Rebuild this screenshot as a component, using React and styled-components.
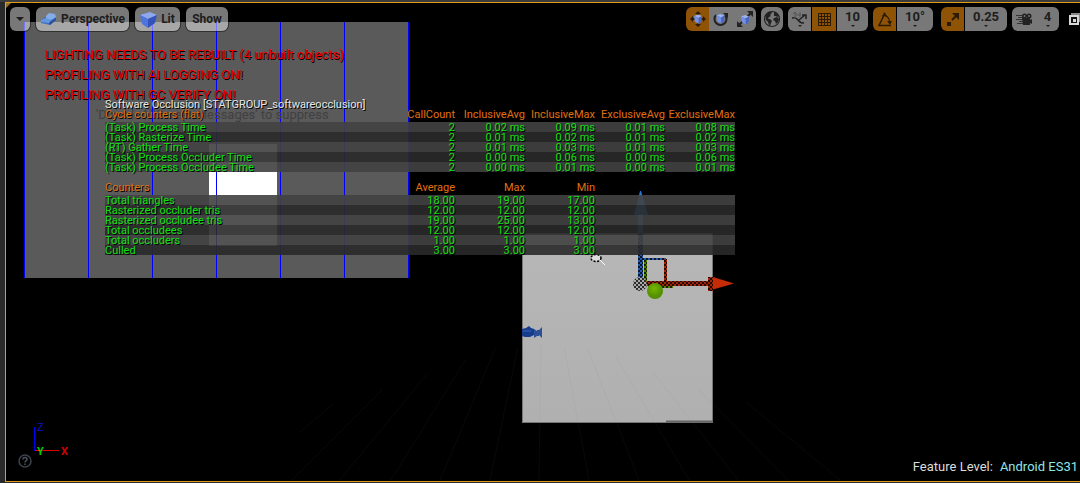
import React from "react";
import styled, { createGlobalStyle, css } from "styled-components";

const GlobalStyle = createGlobalStyle`
  *, *::before, *::after { box-sizing: border-box; }
  body { margin: 0; background: #1e1e1e; font-family: Roboto, "Liberation Sans", sans-serif; }
  button { font: inherit; color: inherit; border: 0; margin: 0; padding: 0; cursor: pointer; }
  svg { flex: none; }
`;

const Page = styled.div`
  min-height: 100vh;
  padding: 2px 0 1px 5px;
  display: flex;
  background: linear-gradient(#3c3c3c 0 2px, #2a2a2a 2px);
`;

const Viewport = styled.main`
  position: relative;
  flex: 1;
  min-width: 0;
  display: flex;
  flex-direction: column;
  overflow: hidden;
  background: #000;
  border: solid #de9c18;
  border-width: 1px 0 1px 1px;
`;

const SceneSvg = styled.svg`
  position: absolute;
  inset: 0;
  width: 100%;
  height: 100%;
`;

const Toolbar = styled.header`
  position: relative;
  display: flex;
  justify-content: space-between;
  padding: 4px 0 0 4px;
  height: 28px;
`;

const ToolGroup = styled.div`
  display: flex;
  gap: ${(p) => p.$gap}px;
`;

const Segments = styled.div`
  display: flex;
  gap: ${(p) => (p.$joined ? 0 : 1)}px;
  border-radius: 6px;
  overflow: hidden;
  margin-right: ${(p) => p.$after || 0}px;
`;

const ToolButton = styled.button`
  position: relative;
  display: flex;
  align-items: center;
  justify-content: center;
  gap: 4px;
  width: ${(p) => p.$w}px;
  height: 24px;
  color: #1d1d1d;
  font-size: ${(p) => p.$size || 12}px;
  font-weight: 700;
  line-height: 16px;
  background: ${(p) => (p.$active ? "#8f5306" : "rgba(255, 255, 255, 0.47)")};
  ${(p) =>
    p.$solo &&
    css`
      border-radius: 6px;
      box-shadow: 0 0 0 1px rgba(0, 0, 0, 0.45);
    `}
  ${(p) =>
    p.$menu &&
    css`
      padding-bottom: 5px;
      &::after {
        content: "";
        position: absolute;
        bottom: 4px;
        left: calc(50% - 2px);
        border: solid transparent;
        border-width: 2px 2px 0;
        border-top-color: #1d1d1d;
      }
    `}
`;

const MaximizeButton = styled.button`
  width: 11px;
  height: 24px;
  background: none;
  overflow: hidden;
  display: flex;
  align-items: center;
`;

const Hud = styled.section`
  position: relative;
  flex: 1;
  display: grid;
  align-items: start;
  justify-items: start;
`;

const Messages = styled.div`
  grid-area: 1 / 1;
  padding: 14px 0 0 39px;
`;

const Warning = styled.p`
  margin: 0;
  font-size: 13px;
  line-height: 20px;
  color: #f00000;
  text-shadow: 1px 1px 0 #000;
`;

const Hint = styled.p`
  margin: 0 0 0 51px;
  font-size: 13px;
  line-height: 20px;
  color: #404040;
`;

const Stats = styled.div`
  grid-area: 1 / 1;
  position: relative;
  width: 630px;
  margin: 68px 0 0 99px;
  font-size: 11px;
  line-height: 8px;
  text-shadow: 1px 1px 0 #000;
`;

const StatsTitle = styled.h2`
  margin: 0;
  padding-top: 2px;
  font-size: 11px;
  font-weight: 400;
  line-height: 8px;
  color: #e6e6e6;
`;

const StatTable = styled.table`
  width: 100%;
  table-layout: fixed;
  border-collapse: collapse;
  margin-bottom: 10px;
  white-space: nowrap;
  color: #10e010;

  th, td { padding: 2px 0 0; height: 10px; font-weight: 400; text-align: right; }
  th:first-child { text-align: left; width: 280px; }
  thead th { height: 13px; padding-bottom: 3px; color: #e07010; }
  tbody tr:nth-child(odd) { background: rgba(66, 66, 66, 0.91); }
  tbody tr:nth-child(even) { background: rgba(42, 42, 42, 0.91); }
`;

const StatusBar = styled.footer`
  position: relative;
  display: flex;
  justify-content: space-between;
  align-items: flex-end;
  padding: 0 2px 4px 12px;
`;

const Corner = styled.div`
  display: flex;
  flex-direction: column;
  padding-bottom: 9px;
`;

const AxisSvg = styled.svg`
  margin: 0 0 -8px 14px;
`;

const HelpButton = styled.button`
  width: 14px;
  height: 14px;
  background: none;
  display: flex;
`;

const Feature = styled.p`
  margin: 0;
  display: flex;
  gap: 7px;
  font-size: 13px;
  line-height: 20px;
  color: #dcdcdc;
  text-shadow: 1px 1px 0 #000;
`;

const FeatureValue = styled.span`
  color: #8fe6e6;
`;

const Cube = ({ x = 0, y = 0, s = 1 }) => (
  <g transform={`translate(${x} ${y}) scale(${s})`}>
    <path d="M0 2 5 0l5 2-4 2.500z" fill="#9ab2f2" />
    <path d="M0 2l6 2.500V12L1 9z" fill="#7390e4" />
    <path d="M10 2 6 4.500V12l3.500-3z" fill="#4565c8" />
  </g>
);

const Icon = ({ w = 16, h = 16, children }) => (
  <svg width={w} height={h} viewBox={`0 0 ${w} ${h}`} aria-hidden="true">
    {children}
  </svg>
);

const DownIcon = () => (
  <Icon w={10} h={6}>
    <path d="M1 1h8L5 5z" fill="#1d1d1d" />
  </Icon>
);

const PerspectiveIcon = () => (
  <Icon w={17} h={14}>
    <path d="M1 8 7 4l4 2 5-1v3l-6 5-9-2z" fill="#3d6fc4" />
    <path d="M6 4 9 1l6 1 1 3-5 3-5-1z" fill="#83aeea" />
    <path d="M1 8l5-2 5 2-2 3-8-1z" fill="#6696de" />
    <path d="M9 11l7-5v2l-6 5z" fill="#294f9a" />
  </Icon>
);

const LitIcon = () => (
  <Icon w={17} h={17}>
    <path d="M0 4 10 1l7 3-9 4z" fill="#8da8ee" />
    <path d="M0 4l8 4v9L2 13z" fill="#4f74df" />
    <path d="M17 4 8 8v9l7-5z" fill="#3453ba" />
  </Icon>
);

const MoveIcon = () => (
  <Icon>
    <path d="M8 0l3 3H9v2H7V3H5zM8 16l3-3H9v-2H7v2H5zM0 8l3-3v2h2v2H3v2zM16 8l-3-3v2h-2v2h2v2z" fill="#2c1a04" />
    <Cube x={4} y={3.500} s={0.800} />
  </Icon>
);

const RotateIcon = () => (
  <Icon>
    <path d="M3 4a6 6 0 1 0 9 0" fill="none" stroke="#222" strokeWidth="2" />
    <path d="M10 2h5v5z" fill="#222" />
    <Cube x={3.500} y={3} s={0.800} />
  </Icon>
);

const ScaleIcon = () => (
  <Icon>
    <path d="M2 14 14 2" stroke="#222" strokeWidth="2" />
    <path d="M10 0h6v6zM0 10v6h6z" fill="#222" />
    <Cube x={4} y={4} s={0.800} />
  </Icon>
);

const GlobeIcon = () => (
  <Icon w={18} h={18}>
    <circle cx="9" cy="9" r="7.500" fill="none" stroke="#222" strokeWidth="1.200" />
    <path d="M2.500 5 6 2l3 0-1 2-1 1 1 1-2 1-1 2 2 0 2 2-1 2-1 3-1-1-1-3-2-2zM11 2l3 1 2 3-2 1-1-1-2 0zM11 8l3-1 2 2-1 3-2 2-1-3-2-1z" fill="#222" />
  </Icon>
);

const SurfaceIcon = () => (
  <Icon w={17} h={18}>
    <path d="M1 8q4-1 6 2t6 3" fill="none" stroke="#222" strokeWidth="1.500" />
    <path d="M4 9V2M2 4l2-2 2 2M5 5h5M9 2v5" fill="none" stroke="#555" />
    <path d="M8 10l6-5M11 5h4v4" fill="none" stroke="#222" strokeWidth="1.500" />
    <path d="M7 15h4l-2 2z" fill="#222" />
  </Icon>
);

const GridIcon = () => (
  <Icon w={15} h={15}>
    <path d="M1 1.500h13M1 4.500h13M1 7.500h13M1 10.500h13M1 13.500h13M1.500 1v13M4.500 1v13M7.500 1v13M10.500 1v13M13.500 1v13" stroke="#2c1a04" />
  </Icon>
);

const AngleIcon = () => (
  <Icon w={16} h={16}>
    <path d="M14 14.500H2L8 2" fill="none" stroke="#2c1a04" strokeWidth="1.500" />
    <path d="M5 5q6-2 8 6" fill="none" stroke="#2c1a04" strokeWidth="1.200" />
    <path d="M10 10h5l-2 4zM7 1l3 4-4 0z" fill="#2c1a04" />
  </Icon>
);

const ScaleSnapIcon = () => (
  <Icon w={14} h={14}>
    <path d="M1 10h4v4H1z" fill="#2c1a04" />
    <path d="M6 8l4-4" stroke="#2c1a04" strokeWidth="2" />
    <path d="M6 1h7v7z" fill="#2c1a04" />
  </Icon>
);

const CameraIcon = () => (
  <Icon w={18} h={14}>
    <path d="M1 3.500h7M3 5.500h6M1 7.500h7M4 9.500h4M2 11.500h6" stroke="#333" />
    <circle cx="9.500" cy="4" r="2.500" fill="#222" />
    <circle cx="14" cy="4" r="2.500" fill="#222" />
    <circle cx="9.500" cy="4" r="0.900" fill="#777" />
    <circle cx="14" cy="4" r="0.900" fill="#777" />
    <path d="M7 6h8v2l2-1v5l-2-1v2H8z" fill="#222" />
  </Icon>
);

const MaximizeIcon = () => (
  <Icon w={14} h={14}>
    <path d="M2 1h12v9H2z" fill="#888" />
    <path d="M0 3h10v10H0z" fill="#d8d8d8" />
    <path d="M2 5h6v6H2z" fill="#111" />
    <path d="M4 7h3v3H4z" fill="#d8d8d8" />
  </Icon>
);

const floorLines = [
  [333, 404, 300, 432], [382, 390, 292, 480], [427, 374, 340, 480],
  [466, 359, 391, 480], [496, 347, 440, 480], [518, 347, 490, 480],
  [541, 345, 539, 480], [564, 347, 589, 480], [587, 347, 639, 480],
  [616, 357, 689, 480], [653, 372, 738, 480], [697, 388, 788, 480],
  [746, 402, 840, 480],
];

const Scene = () => (
  <SceneSvg aria-hidden="true">
    <defs>
      <pattern id="checker" width="4" height="4" patternUnits="userSpaceOnUse">
        <path d="M0 0h2v2H0zM2 2h2v2H2z" fill="#000" fillOpacity="0.750" />
      </pattern>
      <linearGradient id="face" x1="0" y1="0" x2="0" y2="1">
        <stop offset="0" stopColor="#b7b7b7" />
        <stop offset="1" stopColor="#b0b0b0" />
      </linearGradient>
      <radialGradient id="ball" cx="0.450" cy="0.350">
        <stop offset="0" stopColor="#74b800" />
        <stop offset="1" stopColor="#549000" />
      </radialGradient>
    </defs>
    <g transform="translate(-6 -3)">
      <path d="M6 3h5l-5 5z" fill="#96702a" />
      <rect x="24" y="22" width="385" height="256" fill="#5a5a5a" />
      <rect x="209" y="144" width="68" height="102" fill="#fff" />
      {[24, 88, 152, 216, 280, 344, 408].map((x) => (
        <rect key={x} x={x} y="22" width="1" height="256" fill="#0000ff" />
      ))}
      <rect x="522" y="233" width="191" height="190" fill="#777" />
      <rect x="523" y="234" width="189" height="188" fill="url(#face)" />
      <path d="M666 421.500h47" stroke="#666" strokeWidth="2" />
      {floorLines.map(([a, b, c, d]) => (
        <line key={a} x1={a} y1={b} x2={c} y2={d} stroke="#777" strokeOpacity="0.080" />
      ))}
      <path d="M522 329l4-1 3-2 2 2 3 1v6l-4 2h-5l-3-1z" fill="#173c8c" />
      <path d="M534 329l3 2v5l-3 2zM537 330h2v6h-2zM539 330l3-3v11l-3-3z" fill="#2d4f98" />
      <path d="M523 331h8" stroke="#3a66bd" />
      <ellipse cx="596" cy="258" rx="5" ry="3" fill="#ddd" />
      <ellipse cx="596" cy="258" rx="5" ry="3.500" fill="none" stroke="#000" strokeWidth="1.500" strokeDasharray="2 1.500" />
      <path d="M600 260l5 5" stroke="#fff" />
      <path d="M638 215h5v65h-5z" fill="#2458a8" />
      <path d="M638 233h5v47h-5z" fill="url(#checker)" />
      <path d="M640 191h1l7 24h-14z" fill="#2878d8" />
      <path d="M643 258h23v2h-23z" fill="#2458a8" />
      <path d="M643 258h23v2h-23z" fill="url(#checker)" />
      <path d="M644 260h3v24h-3zM648 285h25v3h-25z" fill="#558000" />
      <path d="M644 260h3v24h-3zM648 285h25v3h-25z" fill="url(#checker)" />
      <path d="M664 259h3v23h-3zM643 281h66v5h-66zM708 277h5v14h-5z" fill="#a02408" />
      <path d="M664 259h3v23h-3zM643 281h66v5h-66zM708 277h5v14h-5z" fill="url(#checker)" />
      <path d="M713 277l21 6.500-21 6z" fill="#c62c08" />
      <circle cx="640" cy="284" r="7" fill="#aaa" />
      <circle cx="640" cy="284" r="7" fill="url(#checker)" />
      <circle cx="655" cy="291" r="8" fill="url(#ball)" />
    </g>
  </SceneSvg>
);

const cycleRows = [
  ["(Task) Process Time", "2", "0.02 ms", "0.09 ms", "0.01 ms", "0.08 ms"],
  ["(Task) Rasterize Time", "2", "0.01 ms", "0.02 ms", "0.01 ms", "0.02 ms"],
  ["(RT) Gather Time", "2", "0.01 ms", "0.03 ms", "0.01 ms", "0.03 ms"],
  ["(Task) Process Occluder Time", "2", "0.00 ms", "0.06 ms", "0.00 ms", "0.06 ms"],
  ["(Task) Process Occludee Time", "2", "0.00 ms", "0.01 ms", "0.00 ms", "0.01 ms"],
];

const counterRows = [
  ["Total triangles", "18.00", "19.00", "17.00", "", ""],
  ["Rasterized occluder tris", "12.00", "12.00", "12.00", "", ""],
  ["Rasterized occludee tris", "19.00", "25.00", "13.00", "", ""],
  ["Total occludees", "12.00", "12.00", "12.00", "", ""],
  ["Total occluders", "1.00", "1.00", "1.00", "", ""],
  ["Culled", "3.00", "3.00", "3.00", "", ""],
];

const StatsBlock = ({ heads, rows }) => (
  <StatTable>
    <thead>
      <tr>{heads.map((h, i) => <th key={i} scope="col">{h}</th>)}</tr>
    </thead>
    <tbody>
      {rows.map(([name, ...values]) => (
        <tr key={name}>
          <th scope="row">{name}</th>
          {values.map((v, i) => <td key={i}>{v}</td>)}
        </tr>
      ))}
    </tbody>
  </StatTable>
);

export default function App() {
  return (
    <Page>
      <GlobalStyle />
      <Viewport>
        <Scene />
        <Toolbar>
          <ToolGroup $gap={6}>
            <ToolButton $solo $w={20} aria-label="Viewport options"><DownIcon /></ToolButton>
            <ToolButton $solo $w={93}><PerspectiveIcon />Perspective</ToolButton>
            <ToolButton $solo $w={45}><LitIcon />Lit</ToolButton>
            <ToolButton $solo $w={42}>Show</ToolButton>
          </ToolGroup>
          <ToolGroup $gap={5}>
            <Segments $joined>
              <ToolButton $active $w={23} aria-label="Move"><MoveIcon /></ToolButton>
              <ToolButton $w={24} aria-label="Rotate"><RotateIcon /></ToolButton>
              <ToolButton $w={23} aria-label="Scale"><ScaleIcon /></ToolButton>
            </Segments>
            <Segments>
              <ToolButton $w={22} aria-label="World space"><GlobeIcon /></ToolButton>
            </Segments>
            <Segments>
              <ToolButton $w={23} aria-label="Surface snapping"><SurfaceIcon /></ToolButton>
              <ToolButton $active $w={24} aria-label="Grid snapping"><GridIcon /></ToolButton>
              <ToolButton $menu $size={13} $w={31}>10</ToolButton>
            </Segments>
            <Segments $after={3}>
              <ToolButton $active $w={23} aria-label="Rotation snapping"><AngleIcon /></ToolButton>
              <ToolButton $menu $size={13} $w={36}>10°</ToolButton>
            </Segments>
            <Segments>
              <ToolButton $active $w={23} aria-label="Scale snapping"><ScaleSnapIcon /></ToolButton>
              <ToolButton $menu $size={13} $w={42}>0.25</ToolButton>
            </Segments>
            <Segments $joined $after={5}>
              <ToolButton $w={24} aria-label="Camera"><CameraIcon /></ToolButton>
              <ToolButton $menu $size={13} $w={23}>4</ToolButton>
            </Segments>
            <MaximizeButton aria-label="Restore viewport"><MaximizeIcon /></MaximizeButton>
          </ToolGroup>
        </Toolbar>
        <Hud>
          <Messages>
            <Warning>LIGHTING NEEDS TO BE REBUILT (4 unbuilt objects)</Warning>
            <Warning>PROFILING WITH AI LOGGING ON!</Warning>
            <Warning>PROFILING WITH GC VERIFY ON!</Warning>
            <Hint>'DisableAllScreenMessages' to suppress</Hint>
          </Messages>
          <Stats>
            <StatsTitle>Software Occlusion [STATGROUP_softwareocclusion]</StatsTitle>
            <StatsBlock
              heads={["Cycle counters (flat)", "CallCount", "InclusiveAvg", "InclusiveMax", "ExclusiveAvg", "ExclusiveMax"]}
              rows={cycleRows}
            />
            <StatsBlock heads={["Counters", "Average", "Max", "Min", "", ""]} rows={counterRows} />
          </Stats>
        </Hud>
        <StatusBar>
          <Corner>
            <AxisSvg width="48" height="40" viewBox="0 0 48 40" aria-hidden="true">
              <path d="M2.500 5v24" stroke="#0000f0" />
              <path d="M3 28.500h24" stroke="#e00000" />
              <text x="5" y="9" fontSize="11" fill="#1010c8">Z</text>
              <text x="5" y="33" fontSize="11" fontWeight="700" fill="#00d000">Y</text>
              <text x="29" y="33" fontSize="11" fontWeight="700" fill="#d00000">X</text>
            </AxisSvg>
            <HelpButton aria-label="Help">
              <Icon w={14} h={14}>
                <circle cx="7" cy="7" r="6" fill="none" stroke="#3a424c" strokeWidth="1.500" />
                <path d="M5 5.500q0-2 2-2t2 1.800q0 1-1 1.500t-1 1.700M7 9.500v1.500" fill="none" stroke="#4a525c" strokeWidth="1.500" />
              </Icon>
            </HelpButton>
          </Corner>
          <Feature>Feature Level: <FeatureValue>Android ES31</FeatureValue></Feature>
        </StatusBar>
      </Viewport>
    </Page>
  );
}
